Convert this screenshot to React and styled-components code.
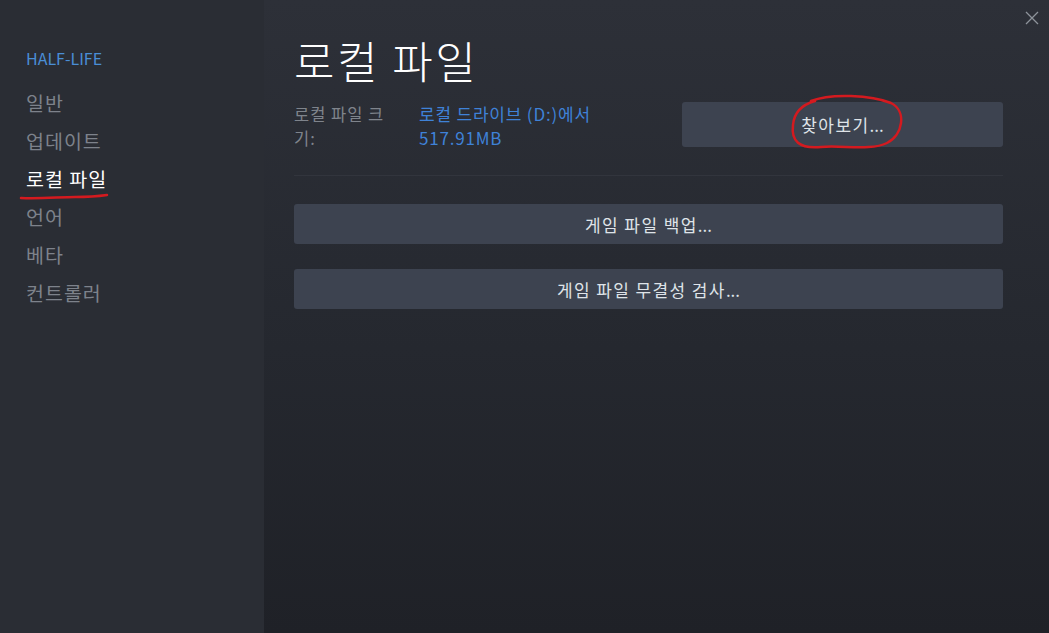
import styled, { createGlobalStyle } from "styled-components";

const GlobalStyle = createGlobalStyle`
  html, body {
    margin: 0;
    padding: 0;
    background: #22252b;
  }
  * {
    box-sizing: border-box;
  }
`;

const Window = styled.div`
  position: relative;
  display: flex;
  width: 1049px;
  height: 633px;
  overflow: hidden;
  font-family: "Noto Sans CJK KR", "Noto Sans", sans-serif;
`;

const Sidebar = styled.nav`
  width: 264px;
  flex-shrink: 0;
  background: #2a2d34;
  padding: 48px 0 0 26px;
`;

const GameTitle = styled.div`
  font-size: 16px;
  line-height: 20px;
  color: #4a8ed6;
  margin-bottom: 16px;
`;

const NavItem = styled.div`
  position: relative;
  font-size: 19.5px;
  letter-spacing: 1px;
  line-height: 38px;
  color: ${(p) => (p.$active ? "#ffffff" : "#7d828b")};
  cursor: pointer;
`;

const Main = styled.main`
  flex: 1;
  background: linear-gradient(180deg, #2d3038 0%, #25282f 55%, #1f2127 100%);
  padding: 30px 46px 0 30px;
`;

const Title = styled.h1`
  margin: 0 0 12px;
  font-size: 44px;
  letter-spacing: 2.5px;
  line-height: 60px;
  font-weight: 300;
  color: #ffffff;
`;

const InfoRow = styled.div`
  display: flex;
  align-items: flex-start;
`;

const Label = styled.div`
  width: 105px;
  margin-right: 20px;
  font-size: 16.5px;
  letter-spacing: 1px;
  line-height: 24px;
  color: #7f848c;
`;

const Value = styled.div`
  flex: 1;
  font-size: 17px;
  letter-spacing: 0.8px;
  line-height: 24px;
  color: #3f82d8;
`;

const Button = styled.button`
  position: relative;
  display: flex;
  align-items: center;
  justify-content: center;
  width: ${(p) => p.$width || "100%"};
  height: ${(p) => p.$height || "40px"};
  border: none;
  border-radius: 3px;
  background: #3d4350;
  color: #dfe3e8;
  font-family: inherit;
  font-size: 17px;
  letter-spacing: 1.4px;
  cursor: pointer;
  &:hover {
    background: #464d5b;
  }
`;

const Dots = styled.span`
  letter-spacing: 0;
`;

const Separator = styled.hr`
  margin: 25px 0 28px;
  border: none;
  border-top: 1px solid #32353d;
`;

const ButtonStack = styled.div`
  display: flex;
  flex-direction: column;
  gap: 25px;
`;

const CloseButton = styled.div`
  position: absolute;
  top: 6px;
  right: 10px;
  width: 14px;
  height: 14px;
  cursor: pointer;
`;

const Annotation = styled.svg`
  position: absolute;
  pointer-events: none;
  overflow: visible;
`;

function App() {
  const navItems = ["일반", "업데이트", "로컬 파일", "언어", "베타", "컨트롤러"];

  return (
    <>
      <GlobalStyle />
      <Window>
        <Sidebar>
          <GameTitle>HALF-LIFE</GameTitle>
          {navItems.map((item) => (
            <NavItem key={item} $active={item === "로컬 파일"}>
              {item}
              {item === "로컬 파일" && (
                <Annotation
                  width="92"
                  height="8"
                  viewBox="0 0 92 8"
                  style={{ left: -6, top: 33 }}
                >
                  <path
                    d="M1 5 C 20 6, 40 4, 55 4 S 80 3, 87 2"
                    fill="none"
                    stroke="#d41a1f"
                    strokeWidth="2.5"
                    strokeLinecap="round"
                  />
                </Annotation>
              )}
            </NavItem>
          ))}
        </Sidebar>
        <Main>
          <Title>로컬 파일</Title>
          <InfoRow>
            <Label>로컬 파일 크기:</Label>
            <Value>
              로컬 드라이브 (D:)에서
              <br />
              517.91MB
            </Value>
            <Button $width="321px" $height="45px">
              찾아보기<Dots>...</Dots>
              <Annotation
                width="114"
                height="58"
                viewBox="0 0 114 58"
                style={{ left: 109, top: -7 }}
              >
                <path
                  d="M20 6 C 40 -2, 80 0, 100 8 C 116 16, 112 40, 96 48 C 80 56, 50 50, 30 52 C 8 54, 0 46, 2 30 C 3 18, 10 10, 24 6"
                  fill="none"
                  stroke="#d41a1f"
                  strokeWidth="2.5"
                  strokeLinecap="round"
                />
              </Annotation>
            </Button>
          </InfoRow>
          <Separator />
          <ButtonStack>
            <Button>
              게임 파일 백업<Dots>...</Dots>
            </Button>
            <Button>
              게임 파일 무결성 검사<Dots>...</Dots>
            </Button>
          </ButtonStack>
        </Main>
        <CloseButton>
          <svg width="14" height="14" viewBox="0 0 14 14">
            <path
              d="M1 1 L13 13 M13 1 L1 13"
              stroke="#8d939b"
              strokeWidth="1.3"
              fill="none"
            />
          </svg>
        </CloseButton>
      </Window>
    </>
  );
}

export default App;
